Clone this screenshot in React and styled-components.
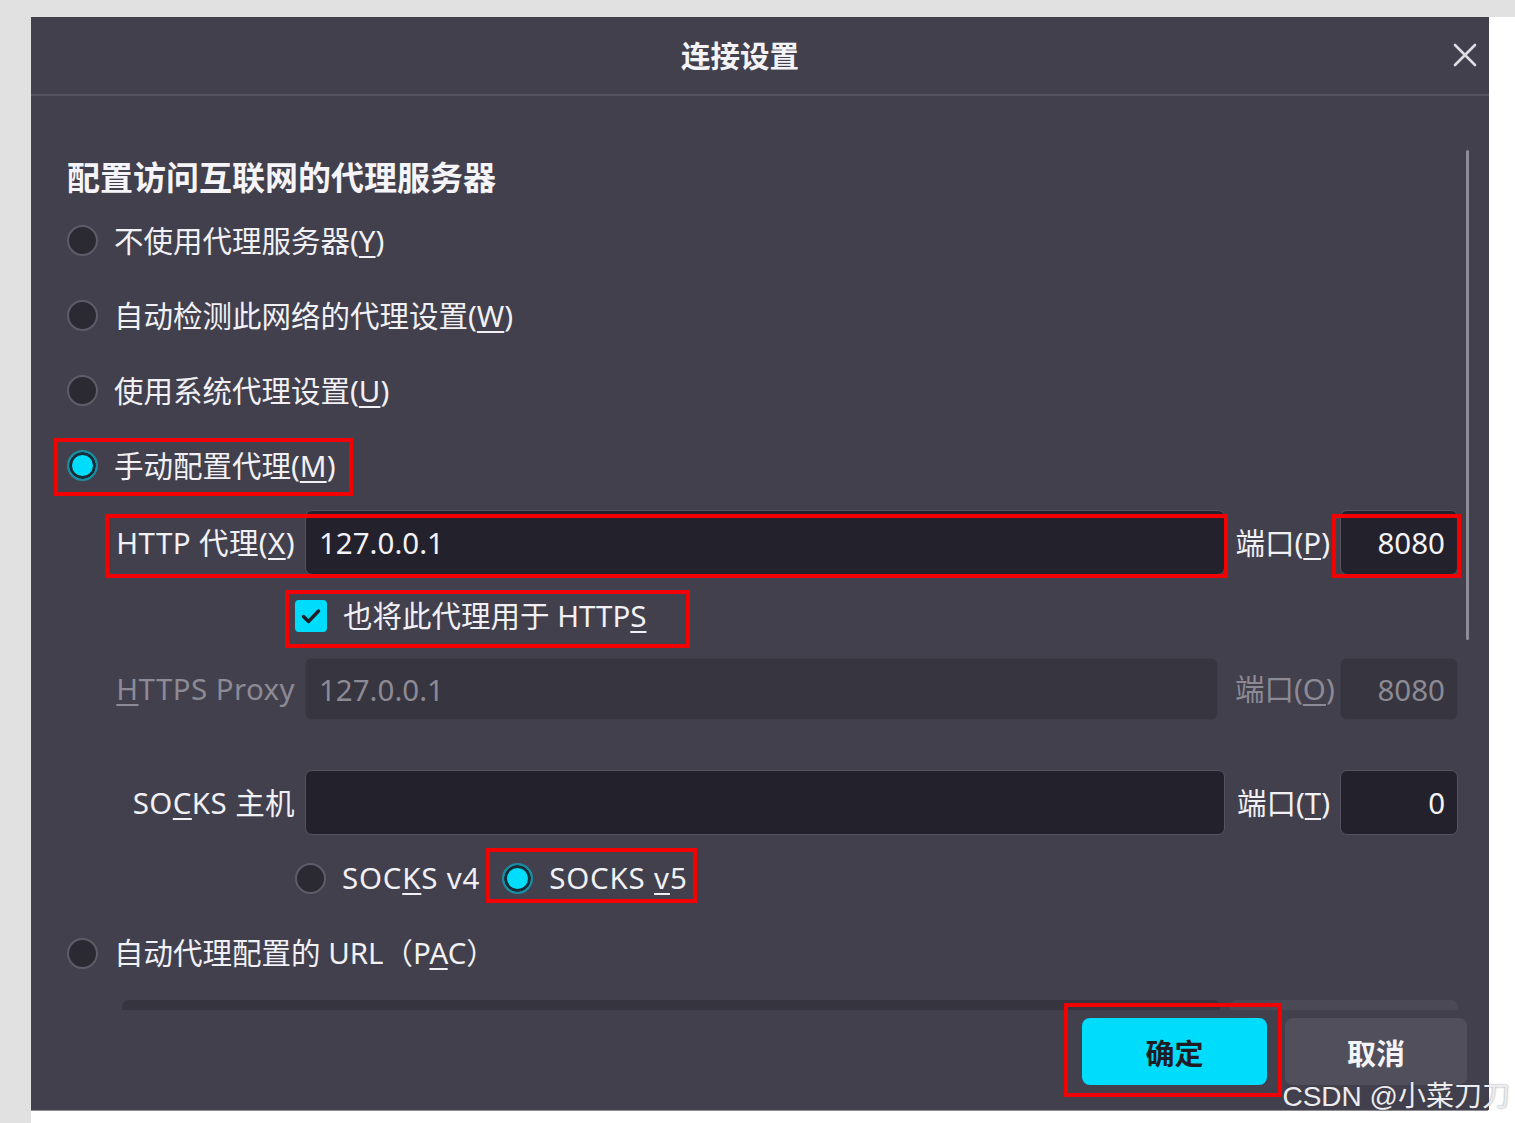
import React from "react";
import styled, { createGlobalStyle } from "styled-components";

const GlobalStyle = createGlobalStyle`
  html, body {
    margin: 0;
    padding: 0;
    background: #ffffff;
  }
  body {
    font-family: "Noto Sans", "Noto Sans CJK SC", sans-serif;
  }
`;

const Radio = ({ checked }) => <RadioDot $checked={checked} />;

const Checkbox = () => (
  <CheckBox>
    <svg width="32" height="32" viewBox="0 0 32 32">
      <path
        d="M8.5 16.5l5 5L23.5 11"
        fill="none"
        stroke="#1f1e27"
        strokeWidth="3.4"
        strokeLinecap="round"
        strokeLinejoin="round"
      />
    </svg>
  </CheckBox>
);

const App = () => {
  return (
    <Page>
      <GlobalStyle />
      <Dialog>
        <Header>
          <span />
          <Title>连接设置</Title>
          <CloseButton>
            <svg width="26" height="26" viewBox="0 0 26 26">
              <path
                d="M3 3L23 23M23 3L3 23"
                stroke="#dedde3"
                strokeWidth="2.6"
                strokeLinecap="round"
              />
            </svg>
          </CloseButton>
        </Header>

        <Body>
          <ScrollThumb />
          <Heading>配置访问互联网的代理服务器</Heading>

          <OptionList>
            <Option>
              <Radio />
              <Label>
                不使用代理服务器(<u>Y</u>)
              </Label>
            </Option>
            <Option>
              <Radio />
              <Label>
                自动检测此网络的代理设置(<u>W</u>)
              </Label>
            </Option>
            <Option>
              <Radio />
              <Label>
                使用系统代理设置(<u>U</u>)
              </Label>
            </Option>
            <Option>
              <Mark $t={-8} $r={-18} $b={-10} $l={-13}>
                <Radio checked />
                <Label>
                  手动配置代理(<u>M</u>)
                </Label>
              </Mark>
            </Option>
          </OptionList>

          <ProxyRow $h={65} $mt={7}>
            <Mark $grow $t={4} $r={-3} $b={-3} $l={38}>
              <FieldLabel>
                HTTP 代理(<u>X</u>)
              </FieldLabel>
              <TextInput $h={65}>127.0.0.1</TextInput>
            </Mark>
            <PortLabel>
              端口(<u>P</u>)
            </PortLabel>
            <Mark $t={4} $r={-3} $b={-3} $l={-8}>
              <PortInput $h={65}>8080</PortInput>
            </Mark>
          </ProxyRow>

          <SubRow $h={82}>
            <Mark $t={-6} $r={-44} $b={-12} $l={-10}>
              <Checkbox />
              <Label>
                也将此代理用于 HTTP<u>S</u>
              </Label>
            </Mark>
          </SubRow>

          <ProxyRow $h={64}>
            <FieldGroup>
              <FieldLabel $disabled>
                <u>H</u>TTPS Proxy
              </FieldLabel>
              <TextInput $h={62} $disabled $shrink>
                127.0.0.1
              </TextInput>
            </FieldGroup>
            <PortLabel $disabled>
              端口(<u>O</u>)
            </PortLabel>
            <PortInput $h={62} $disabled>
              8080
            </PortInput>
          </ProxyRow>

          <ProxyRow $h={65} $mt={49}>
            <FieldGroup>
              <FieldLabel>
                SO<u>C</u>KS 主机
              </FieldLabel>
              <TextInput $h={65} />
            </FieldGroup>
            <PortLabel>
              端口(<u>T</u>)
            </PortLabel>
            <PortInput $h={65}>0</PortInput>
          </ProxyRow>

          <SubRow $h={86}>
            <VersionItem>
              <Radio />
              <Label $wide>
                SOC<u>K</u>S v4
              </Label>
            </VersionItem>
            <Mark $t={-10} $r={-9} $b={-5} $l={-16}>
              <Radio checked />
              <Label $wide>
                SOCKS <u>v</u>5
              </Label>
            </Mark>
          </SubRow>

          <Option $h={64}>
            <Radio />
            <Label>
              自动代理配置的 URL（P<u>A</u>C）
            </Label>
          </Option>

          <PacRow>
            <PacInput />
            <ReloadButton />
          </PacRow>
        </Body>

        <Footer>
          <Mark $t={-15} $r={-15} $b={-12} $l={-18}>
            <Button $primary>确定</Button>
          </Mark>
          <Button>取消</Button>
        </Footer>
      </Dialog>
      <Watermark>CSDN @小菜刀刀</Watermark>
    </Page>
  );
};

const Page = styled.div`
  position: relative;
  box-sizing: border-box;
  width: 1515px;
  height: 1123px;
  overflow: hidden;
  background: #ffffff;
  border-top: 17px solid #e1e1e1;
  border-left: 31px solid #e1e1e1;
`;

const Dialog = styled.div`
  width: 1458px;
  height: 1093px;
  display: flex;
  flex-direction: column;
  background: #42404c;
  color: #f1f0f5;
  box-shadow: -1px 1px 0 #8f8e95, 0 -1px 0 #cfcfd2;
`;

const Header = styled.div`
  height: 77px;
  flex-shrink: 0;
  display: grid;
  grid-template-columns: 1fr auto 1fr;
  align-items: center;
  border-bottom: 2px solid #55535f;
`;

const Title = styled.div`
  font-family: "Noto Sans CJK SC", sans-serif;
  font-size: 29.5px;
  font-weight: 700;
  color: #f4f3f7;
  margin: -4px 40px 0 0;
`;

const CloseButton = styled.div`
  justify-self: end;
  display: flex;
  padding-right: 11px;
  margin-top: -2px;
`;

const Body = styled.div`
  position: relative;
  flex: 1;
  overflow: hidden;
  padding: 62px 31px 0 36px;
`;

const ScrollThumb = styled.div`
  position: absolute;
  top: 54px;
  right: 20px;
  width: 3px;
  height: 490px;
  border-radius: 2px;
  background: #8e8c96;
`;

const Heading = styled.h2`
  margin: 0;
  height: 40px;
  line-height: 36px;
  font-family: "Noto Sans CJK SC", sans-serif;
  font-size: 33px;
  font-weight: 700;
  color: #f5f4f8;
`;

const OptionList = styled.div`
  margin-top: 5px;
  display: flex;
  flex-direction: column;
`;

const Option = styled.div`
  height: ${(p) => p.$h || 75}px;
  display: flex;
  align-items: center;
  gap: 16px;
`;

const Label = styled.span`
  font-size: 29.5px;
  line-height: 40px;
  letter-spacing: ${(p) => (p.$wide ? "0.8px" : "normal")};
  color: ${(p) => (p.$disabled ? "#8c8a94" : "#f1f0f5")};
  white-space: nowrap;

  u {
    text-decoration-thickness: 2px;
    text-underline-offset: 4px;
  }
`;

const RadioDot = styled.span`
  box-sizing: border-box;
  width: 31px;
  height: 31px;
  flex-shrink: 0;
  border-radius: 50%;
  border: 2px solid ${(p) => (p.$checked ? "#1a8ca1" : "#5e5c68")};
  background: ${(p) => (p.$checked ? "#00dcfb" : "#2b2a33")};
  box-shadow: ${(p) => (p.$checked ? "inset 0 0 0 3px #1b2c36" : "none")};
`;

const CheckBox = styled.span`
  width: 32px;
  height: 32px;
  flex-shrink: 0;
  border-radius: 4px;
  background: #00dcfb;
  display: flex;
  align-items: center;
  justify-content: center;
`;

const Mark = styled.div`
  position: relative;
  display: flex;
  align-items: center;
  gap: ${(p) => (p.$grow ? 10 : 16)}px;
  flex: ${(p) => (p.$grow ? 1 : "none")};

  &::after {
    content: "";
    position: absolute;
    top: ${(p) => p.$t}px;
    right: ${(p) => p.$r}px;
    bottom: ${(p) => p.$b}px;
    left: ${(p) => p.$l}px;
    border: 4px solid #f30000;
    pointer-events: none;
  }
`;

const ProxyRow = styled.div`
  height: ${(p) => p.$h}px;
  margin-top: ${(p) => p.$mt || 0}px;
  display: flex;
  align-items: center;
  gap: 10px;
`;

const FieldGroup = styled.div`
  flex: 1;
  display: flex;
  align-items: center;
  gap: 10px;
`;

const FieldLabel = styled(Label)`
  width: 228px;
  flex-shrink: 0;
  text-align: right;
  letter-spacing: 0.4px;
  color: ${(p) => (p.$disabled ? "#8c8a94" : "#f1f0f5")};
`;

const TextInput = styled.div`
  box-sizing: border-box;
  flex: 1;
  height: ${(p) => p.$h}px;
  margin-right: ${(p) => (p.$shrink ? 7 : 0)}px;
  padding: 0 13px;
  display: flex;
  align-items: center;
  font-size: 29.5px;
  border-radius: 7px;
  border: 1px solid ${(p) => (p.$disabled ? "#3d3b46" : "#55535f")};
  background: ${(p) => (p.$disabled ? "#37353f" : "#23212b")};
  color: ${(p) => (p.$disabled ? "#8c8a94" : "#f4f3f7")};
`;

const PortLabel = styled(Label)`
  width: 95px;
  text-align: right;
`;

const PortInput = styled(TextInput)`
  flex: none;
  width: 118px;
  justify-content: flex-end;
  padding: 0 12px 0 0;
`;

const SubRow = styled.div`
  height: ${(p) => p.$h}px;
  padding-left: 228px;
  display: flex;
  align-items: center;
  gap: 22px;
`;

const VersionItem = styled.div`
  display: flex;
  align-items: center;
  gap: 16px;
`;

const PacRow = styled.div`
  margin-top: 15px;
  padding-left: 55px;
  display: flex;
  gap: 10px;
`;

const PacInput = styled.div`
  flex: 1;
  height: 60px;
  border-radius: 7px;
  background: #36343e;
`;

const ReloadButton = styled.div`
  width: 228px;
  height: 60px;
  border-radius: 7px;
  background: #4b4955;
`;

const Footer = styled.div`
  height: 100px;
  flex-shrink: 0;
  box-sizing: border-box;
  padding: 8px 22px 0 0;
  display: flex;
  justify-content: flex-end;
  align-items: flex-start;
  gap: 18px;
  background: #42404c;
`;

const Button = styled.div`
  width: ${(p) => (p.$primary ? 185 : 182)}px;
  height: 67px;
  border-radius: 8px;
  display: flex;
  align-items: center;
  justify-content: center;
  font-family: "Noto Sans CJK SC", sans-serif;
  font-size: 29px;
  font-weight: 700;
  background: ${(p) => (p.$primary ? "#00dcfb" : "#514f5b")};
  color: ${(p) => (p.$primary ? "#1e1d26" : "#f4f3f7")};
`;

const Watermark = styled.div`
  position: absolute;
  right: 5px;
  bottom: 9px;
  font-family: "Liberation Sans", "Noto Sans CJK SC", sans-serif;
  font-size: 28px;
  line-height: 34px;
  color: #ececef;
  text-shadow: 0 0 2px rgba(60, 60, 70, 0.6);
  white-space: nowrap;
`;

export default App;
